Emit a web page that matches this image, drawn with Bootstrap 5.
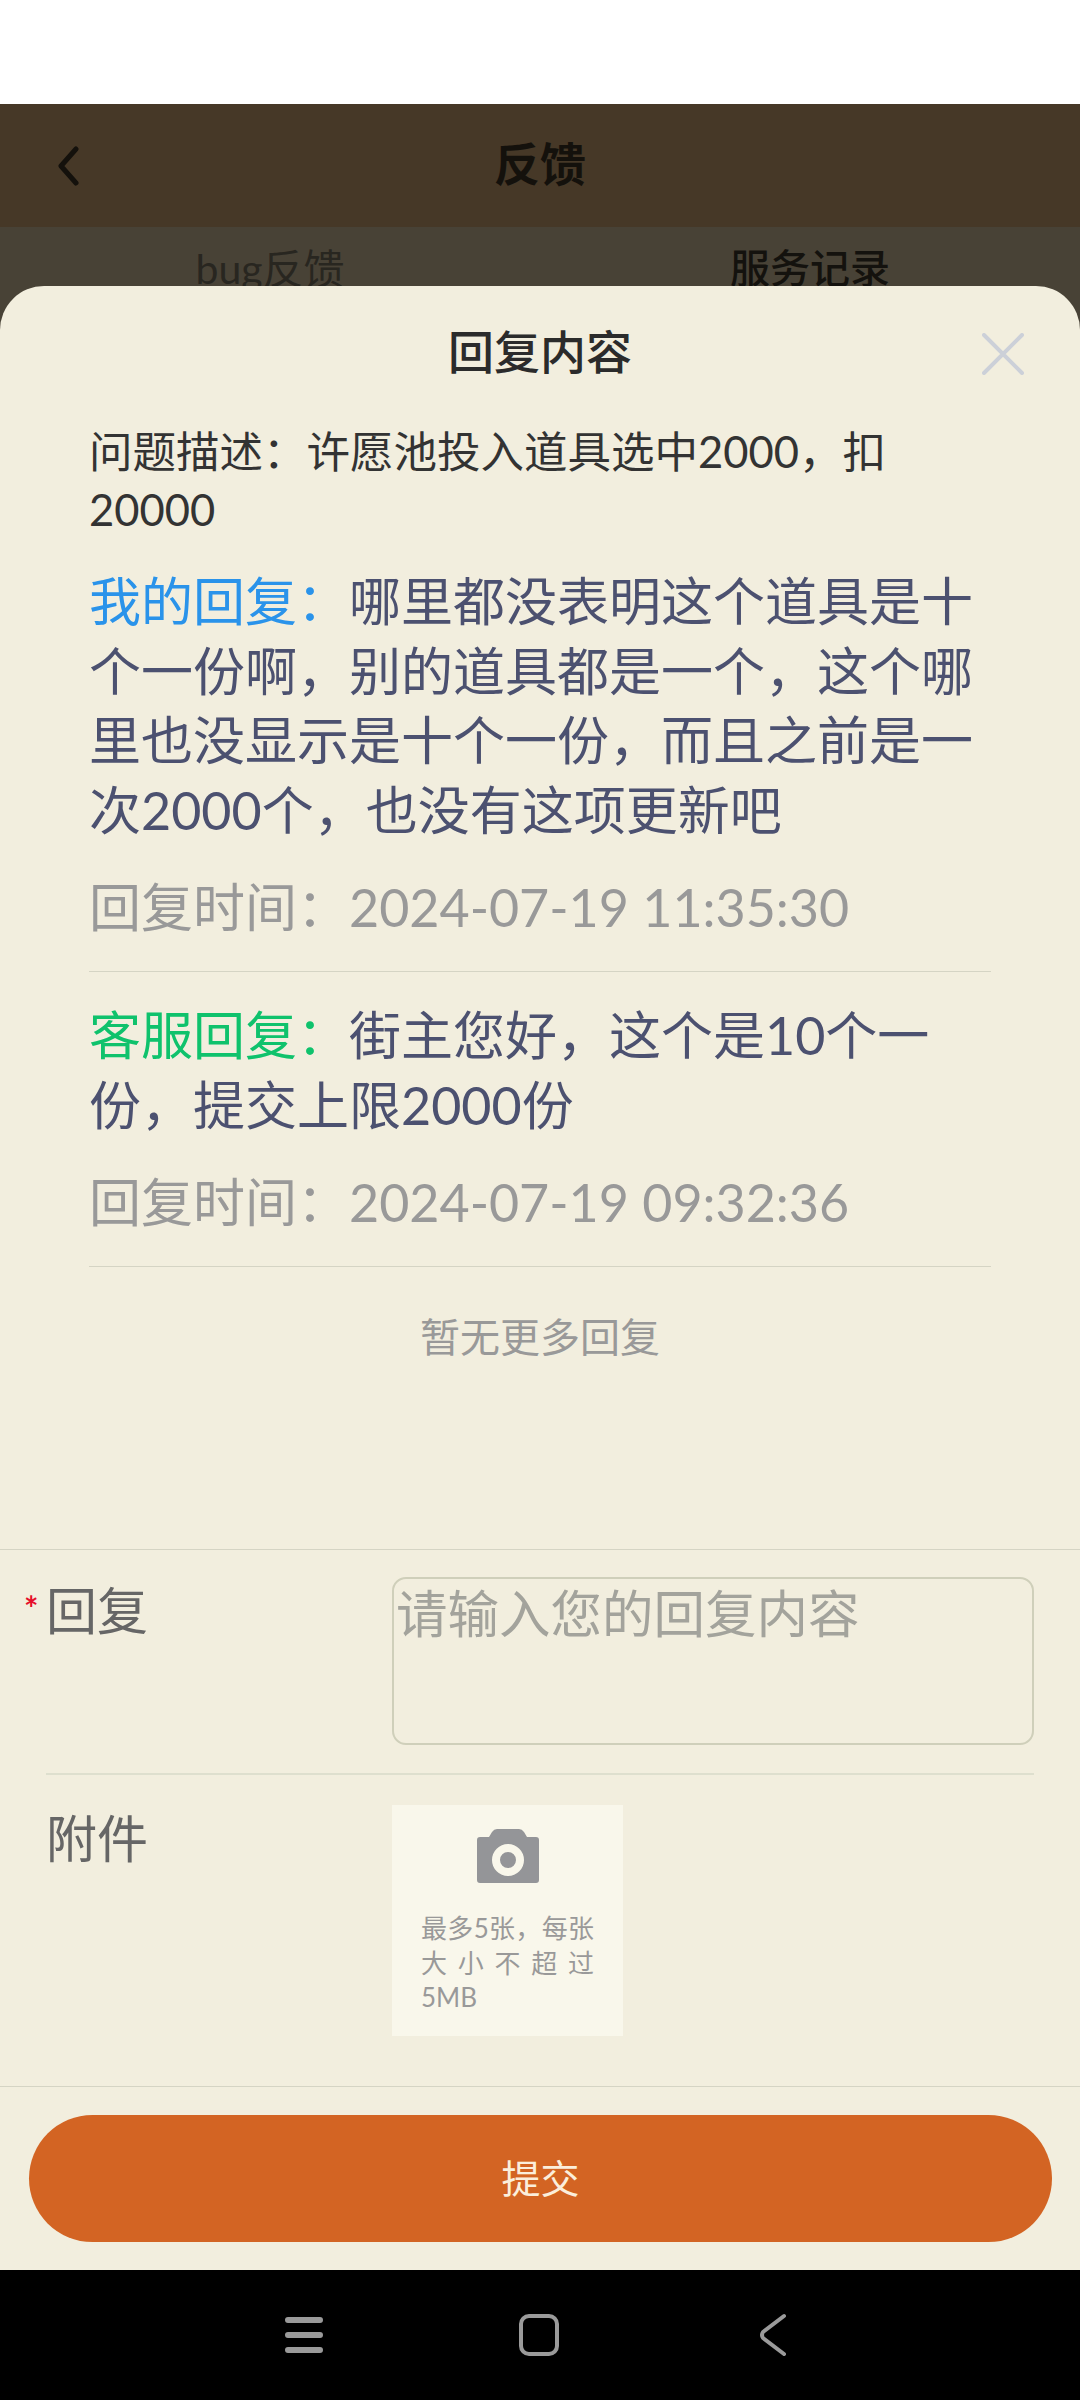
<!DOCTYPE html>
<html lang="zh-CN">
<head>
  <meta charset="UTF-8" />
  <meta name="viewport" content="width=device-width, initial-scale=1.0" />
  <title>反馈</title>
  <link href="https://cdn.jsdelivr.net/npm/bootstrap@5.3.3/dist/css/bootstrap.min.css" rel="stylesheet" />
  <style>
    html, body { height: 100%; }
    body {
      font-family: Lato, "Noto Sans CJK SC", "Noto Sans", sans-serif;
      background: #fff;
    }
    .phone { width: 1080px; height: 2400px; }
    .status-gap { height: 104px; }
    .top-head { height: 123px; background: #463827; color: #14110c; padding-bottom: 4px; }
    .top-head h1 { font-size: 46px; font-weight: 700; margin: 0; }
    .back-btn { left: 56px; top: 42px; }
    .tab-strip { flex: 1; background: #484236; padding-top: 11px; font-size: 40px; color: #282620; }
    .tab-first { font-size: 41px; }
    .tab-on { color: #14120e; font-weight: 500; }
    .sys-nav { height: 130px; background: #000; }
    .sheet {
      left: 0; right: 0; top: 286px; bottom: 130px;
      background: #f2eede;
      border-radius: 44px 44px 0 0;
    }
    .sheet-head { height: 136px; padding-bottom: 4px; }
    .sheet-head h2 { font-size: 46px; font-weight: 500; color: #2b2b2b; margin: 0; }
    .close-x { right: 56px; top: 47px; }
    .sheet-body { height: 1128px; padding: 0 89px; border-bottom: 1px solid #d5d4c4; }
    .problem { font-size: 43.5px; line-height: 58px; color: #333; }
    .reply-item { padding: 29px 0 29px; border-bottom: 1px solid #d5d4c4; }
    .reply-text { font-size: 52px; line-height: 69.5px; color: #4c5170; }
    .who-me { color: #2a93ea; }
    .who-cs { color: #0fc26c; }
    .reply-time { font-size: 52px; line-height: 69px; color: #999; margin-top: 28px; }
    .no-more { font-size: 40px; line-height: 58px; color: #999; margin-top: 41px; }
    .field-row { margin-left: 46px; margin-right: 46px; }
    .field-one { padding-top: 27px; height: 225px; border-bottom: 2px solid #dedfce; }
    .field-two { padding-top: 30px; height: 311px; }
    .field-label { width: 346px; padding-top: 3px; font-size: 51px; line-height: 62px; color: #666; position: relative; }
    .req-star { position: absolute; left: -22px; top: 0; color: #e60f2a; font-size: 34px; font-weight: 700; }
    .reply-input {
      width: 642px; height: 168px;
      background: transparent;
      border: 2px solid #cfcfba;
      border-radius: 14px;
      padding: 3px 2px 0;
      font-size: 51.5px;
      line-height: 62px;
      resize: none;
      outline: 0;
    }
    .reply-input::placeholder { color: #a3a39c; opacity: 1; }
    .upload-box { width: 231px; height: 231px; background: #f9f7eb; padding: 24px 29px 0; }
    .upload-tip { font-size: 26px; line-height: 34.5px; color: #999; text-align: justify; margin-top: 28px; }
    .sheet-foot { border-top: 1px solid #d5d4c4; height: 184px; padding: 28px 28px 0 29px; }
    .submit-btn {
      background: #d36423;
      color: #fbeedb;
      border: 0;
      border-radius: 64px;
      height: 127px;
      font-size: 39px;
    }
    .submit-btn:hover { background: #d36423; color: #fbeedb; }
  </style>
</head>
<body>
  <div class="phone d-flex flex-column position-relative overflow-hidden">
    <div class="status-gap"></div>

    <!-- header behind the sheet -->
    <div class="top-head d-flex align-items-center justify-content-center position-relative">
      <svg class="back-btn position-absolute" width="24" height="40" viewBox="0 0 24 40" fill="none">
        <path d="M20 3 L5 20 L20 37" stroke="#14110c" stroke-width="5" stroke-linecap="round" stroke-linejoin="round"/>
      </svg>
      <h1>反馈</h1>
    </div>
    <div class="tab-strip row g-0 text-center">
      <div class="col-6 tab-first">bug反馈</div>
      <div class="col-6 tab-on">服务记录</div>
    </div>

    <!-- system nav -->
    <div class="sys-nav d-flex align-items-center justify-content-center">
      <svg width="560" height="44" viewBox="0 0 560 44" fill="none">
        <g stroke="#9a9a9a" stroke-linecap="round" stroke-linejoin="round">
          <path d="M28 7 H60 M28 22 H60 M28 37 H60" stroke-width="6"/>
          <rect x="261" y="3" width="36" height="38" rx="8" stroke-width="4"/>
          <path d="M524 3 L503 19 Q501 22 503 25 L524 41" stroke-width="4"/>
        </g>
      </svg>
    </div>

    <!-- bottom sheet -->
    <div class="sheet position-absolute d-flex flex-column">
      <div class="sheet-head d-flex align-items-center justify-content-center position-relative">
        <h2>回复内容</h2>
        <svg class="close-x position-absolute" width="42" height="42" viewBox="0 0 42 42" fill="none">
          <path d="M2 2 L40 40 M40 2 L2 40" stroke="#ccd0d8" stroke-width="4" stroke-linecap="round"/>
        </svg>
      </div>

      <div class="sheet-body">
        <div class="problem">问题描述：许愿池投入道具选中2000，扣<br>20000</div>
        <div class="reply-item">
          <div class="reply-text"><span class="who-me">我的回复：</span>哪里都没表明这个道具是十个一份啊，别的道具都是一个，这个哪里也没显示是十个一份，而且之前是一次2000个，也没有这项更新吧</div>
          <div class="reply-time">回复时间：2024-07-19 11:35:30</div>
        </div>
        <div class="reply-item">
          <div class="reply-text"><span class="who-cs">客服回复：</span>街主您好，这个是10个一份，提交上限2000份</div>
          <div class="reply-time">回复时间：2024-07-19 09:32:36</div>
        </div>
        <div class="no-more text-center">暂无更多回复</div>
      </div>

      <div class="field-row field-one d-flex">
        <div class="field-label"><span class="req-star">*</span>回复</div>
        <textarea class="reply-input" placeholder="请输入您的回复内容"></textarea>
      </div>
      <div class="field-row field-two d-flex">
        <div class="field-label">附件</div>
        <div class="upload-box">
          <div class="d-flex justify-content-center">
            <svg width="62" height="54" viewBox="0 0 62 54">
              <path fill="#949598" fill-rule="evenodd" d="M20 0 H42 Q45 0 47 3 L50 8 H59 Q62 8 62 11 V51 Q62 54 59 54 H3 Q0 54 0 51 V11 Q0 8 3 8 H12 L15 3 Q17 0 20 0 Z M31 15 A16 16 0 1 0 31 47 A16 16 0 1 0 31 15 Z M31 23 A8 8 0 1 1 31 39 A8 8 0 1 1 31 23 Z"/>
            </svg>
          </div>
          <div class="upload-tip">最多5张，每张大小不超过5MB</div>
        </div>
      </div>

      <div class="sheet-foot">
        <button type="button" class="btn submit-btn w-100">提交</button>
      </div>
    </div>
  </div>

  <script src="https://cdn.jsdelivr.net/npm/bootstrap@5.3.3/dist/js/bootstrap.bundle.min.js"></script>
</body>
</html>
